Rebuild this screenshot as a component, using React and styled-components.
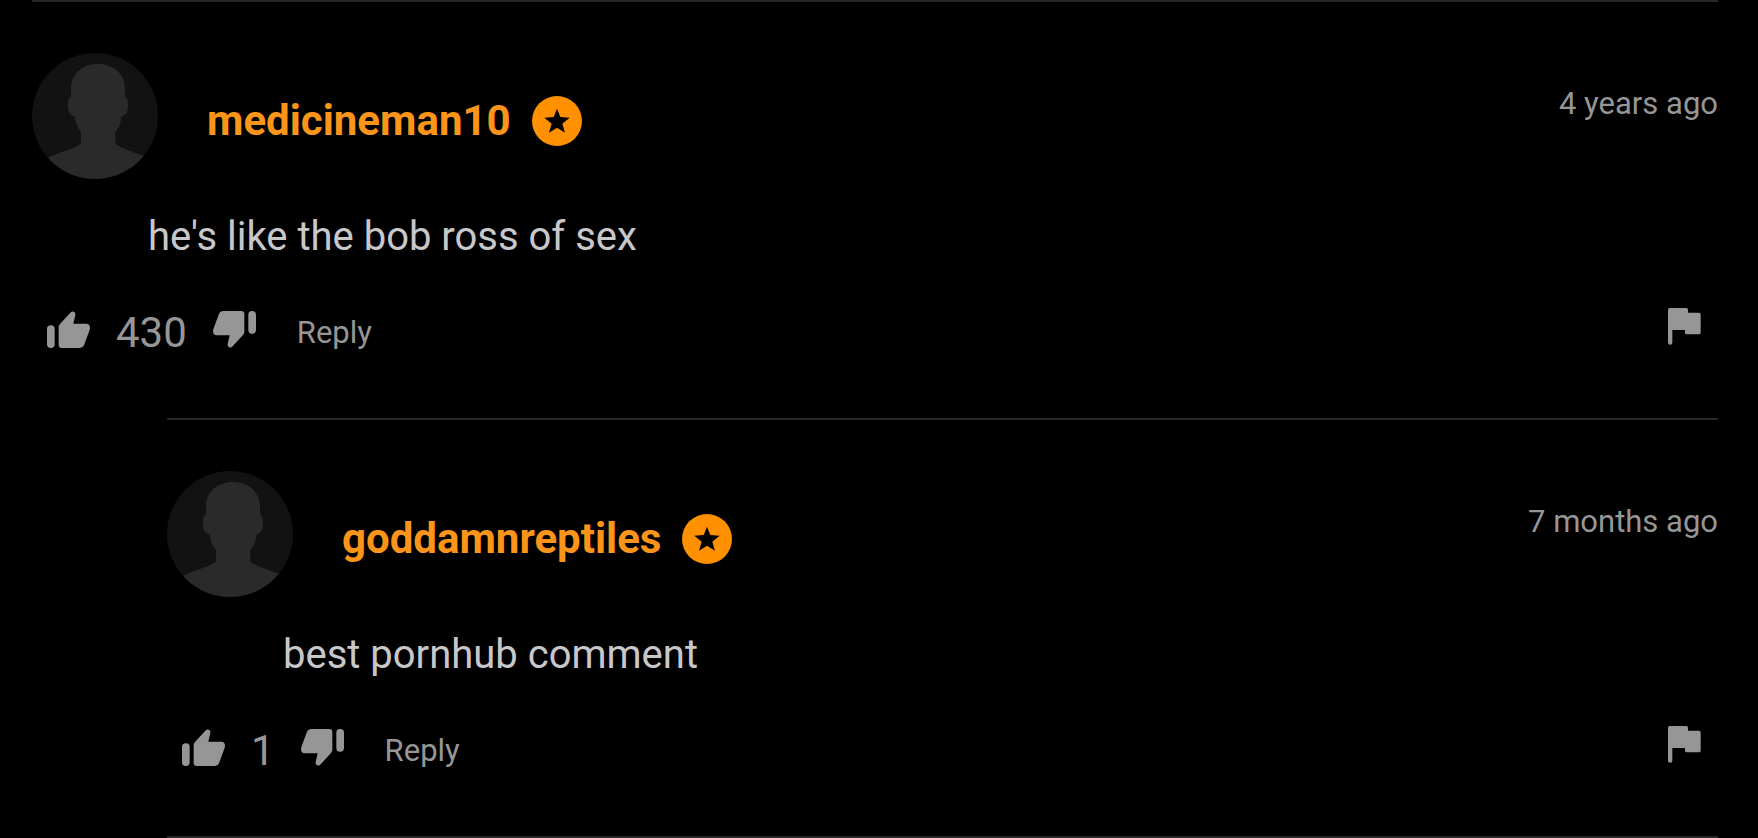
import React from 'react';
import styled, { createGlobalStyle } from 'styled-components';


// Styles
const GlobalStyle = createGlobalStyle`
    body {
        margin: 0;
        background-color: #000000;
        font-family: Roboto, "Liberation Sans", sans-serif;
    }
`;

const PageWrapper = styled.main`
    padding: 0 40px 0 32px;
`;

const ThreadDiv = styled.div`
    border-bottom: 2px solid #272727;
`;

const RepliesDiv = styled.div`
    margin-left: 135px;
`;

const CommentArticle = styled.article`
    padding: 51px 0 60px;
    border-top: 2px solid #272727;
`;

const CommentHeader = styled.header`
    display: flex;
    align-items: flex-start;
    gap: 49px;
`;

const AvatarSvg = styled.svg`
    flex: none;
    width: 126px;
    height: 126px;
    border-radius: 50%;
    background-color: #121212;
`;

const NameDiv = styled.div`
    display: flex;
    flex: 1;
    align-items: center;
    gap: 21px;
    margin-top: 43px;
`;

const NameLink = styled.a`
    color: #FA951A;
    font-size: 42px;
    font-weight: 700;
    line-height: 50px;
    text-decoration: none;
`;

const BadgeSvg = styled.svg`
    flex: none;
    width: 50px;
    height: 50px;
`;

const DateSpan = styled.time`
    margin-top: 33px;
    color: #969696;
    font-size: 31px;
    line-height: 36px;
`;

const CommentText = styled.p`
    margin: 34px 0 47px;
    padding-left: 116px;
    color: #C8C7CA;
    font-size: 40px;
    line-height: 48px;
`;

const ActionsDiv = styled.div`
    display: flex;
    align-items: center;
    height: 50px;
    padding: 0 17px 0 15px;
`;

const ActionButton = styled.button`
    display: block;
    padding: 0;
    border: none;
    background: none;
    color: #969696;
    font-family: inherit;
    font-size: 31px;
    line-height: 36px;
    cursor: pointer;
`;

const ReplyButton = styled(ActionButton)`
    margin-left: 41px;
`;

const FlagButton = styled(ActionButton)`
    align-self: flex-start;
    margin-left: auto;
`;

const VotesSpan = styled.span`
    margin: 0 26px;
    color: #969696;
    font-size: 42px;
    line-height: 50px;
`;

const IconSvg = styled.svg`
    display: block;
    fill: currentColor;
`;


const Avatar = () => {
    return (
        <AvatarSvg viewBox="0 0 378 378" aria-hidden="true">
            <path
                fill="#2A2A2A"
                d="M198 33C149 33 117 65 117 106V131C109 133 108 142 108 160C108 180 115 188 128 190C131 210 136 226 147 236V272C130 286 85 296 50 313V378H336V309C300 295 265 285 250 272V236C261 225 266 211 268 191C281 187 288 178 288 160C288 142 287 134 279 131V106C279 65 247 33 198 33Z"
            />
        </AvatarSvg>
    );
};


const Badge = () => {
    return (
        <BadgeSvg viewBox="0 0 150 150" role="img" aria-label="Star member">
            <circle cx="75" cy="75" r="75" fill="#FF9000" />
            <path
                fill="#000000"
                d="M75 38L85 63L113 65L91 83L99 110L75 95L51 110L59 83L37 65L65 63Z"
            />
        </BadgeSvg>
    );
};


const ThumbIcon = ({ down }) => {
    return (
        <IconSvg width="43" height="45" viewBox="0 0 129 135" aria-hidden="true">
            <g transform={down ? 'rotate(180 64.5 55.5)' : undefined}>
                <rect x="0" y="43" width="23" height="68" rx="11" />
                <path d="M35 49Q35 43 39 39L70 5Q76 -1 82 3Q86 6 85 12L79 38H117Q129 38 129 50Q129 54 127 59L111 103Q108 111 99 111H44Q35 111 35 102Z" />
            </g>
        </IconSvg>
    );
};


const FlagIcon = () => {
    return (
        <IconSvg width="33" height="37" viewBox="0 0 99 111" aria-hidden="true">
            <path d="M5 0H55Q60 0 60 5V14H93Q98 14 98 19V74Q98 79 93 79H56Q51 79 51 74V66H13V104Q13 110 7 110Q0 110 0 104V5Q0 0 5 0Z" />
        </IconSvg>
    );
};


const Comment = (props) => {
    return (
        <CommentArticle>
            <CommentHeader>
                <Avatar />
                <NameDiv>
                    <NameLink href="#">{props.name}</NameLink>
                    <Badge />
                </NameDiv>
                <DateSpan>{props.date}</DateSpan>
            </CommentHeader>
            <CommentText>{props.text}</CommentText>
            <ActionsDiv>
                <ActionButton type="button" aria-label="Like">
                    <ThumbIcon />
                </ActionButton>
                <VotesSpan>{props.votes}</VotesSpan>
                <ActionButton type="button" aria-label="Dislike">
                    <ThumbIcon down />
                </ActionButton>
                <ReplyButton type="button">Reply</ReplyButton>
                <FlagButton type="button" aria-label="Report">
                    <FlagIcon />
                </FlagButton>
            </ActionsDiv>
        </CommentArticle>
    );
};


const App = () => {
    return (
        <PageWrapper>
            <GlobalStyle />
            <Comment
                name="medicineman10"
                date="4 years ago"
                text="he's like the bob ross of sex"
                votes={430}
            />
            <RepliesDiv>
                <ThreadDiv>
                    <Comment
                        name="goddamnreptiles"
                        date="7 months ago"
                        text="best pornhub comment"
                        votes={1}
                    />
                </ThreadDiv>
            </RepliesDiv>
        </PageWrapper>
    );
};


export default App;
